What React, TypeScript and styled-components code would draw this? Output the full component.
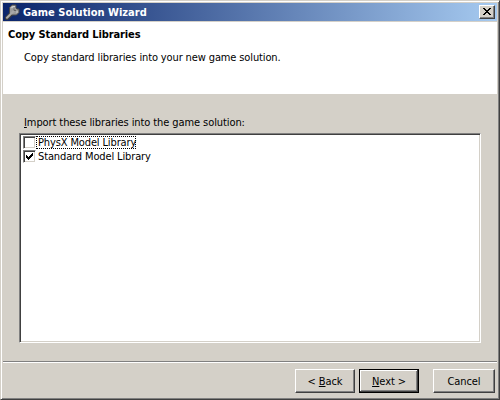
import React from "react";
import styled, { createGlobalStyle } from "styled-components";

const GlobalStyle = createGlobalStyle`
  *, *::before, *::after { box-sizing: border-box; }
  body { margin: 0; background: #d4d0c8; overflow: hidden; }
`;

const Window = styled.div`
  display: flex;
  flex-direction: column;
  width: 500px;
  height: 400px;
  padding: 2px;
  background: #d4d0c8;
  border: 1px solid;
  border-color: #d4d0c8 #404040 #404040 #d4d0c8;
  box-shadow: inset 1px 1px #fff, inset -1px -1px #808080;
  color: #000;
  font: 11px/14px "DejaVu Sans Condensed", "DejaVu Sans", sans-serif;
  font-stretch: condensed;
  cursor: default;
`;

const Label = styled.span<{ $spacing?: number }>`
  letter-spacing: ${(p) => p.$spacing ?? 0}px;
  white-space: pre;
`;

const Mnemonic = styled.span`
  text-decoration: underline;
  text-decoration-thickness: 1px;
  text-underline-offset: 1px;
  text-decoration-skip-ink: none;
`;

const TitleBar = styled.header`
  display: flex;
  align-items: center;
  height: 18px;
  flex: none;
  padding: 0 2px;
  background: linear-gradient(to right, #0a246a, #a6caf0);
  color: #fff;
  font-weight: bold;
`;

const TitleText = styled.div`
  flex: 1;
  padding: 2px 0 0 2px;
`;

const CloseButton = styled.button`
  display: flex;
  width: 16px;
  height: 14px;
  padding: 2px 3px;
  border: 1px solid;
  border-color: #fff #404040 #404040 #fff;
  background: #d4d0c8;
  box-shadow: inset -1px -1px #808080;
`;

const Banner = styled.section`
  height: 72px;
  flex: none;
  margin-top: 1px;
  padding: 6px 5px;
  background: #fff;
`;

const BannerTitle = styled.h1`
  margin: 0;
  font-size: 11px;
  line-height: 14px;
`;

const BannerText = styled.p`
  margin: 9px 0 0 16px;
`;

const Content = styled.main`
  padding: 22px 16px 0;
  height: 267px;
  flex: none;
`;

const ListCaption = styled.div`
  padding-left: 5px;
  height: 17px;
`;

const ListBox = styled.div`
  width: 462px;
  height: 210px;
  padding: 1px 2px;
  border: 1px solid;
  border-color: #808080 #fff #fff #808080;
  background: #fff;
  box-shadow: inset 1px 1px #404040, inset -1px -1px #d4d0c8;
`;

const ListRow = styled.div`
  display: flex;
  align-items: center;
  height: 14px;
  padding-left: 1px;
`;

const CheckBox = styled.span`
  display: flex;
  width: 13px;
  height: 13px;
  padding: 1px;
  border: 1px solid;
  border-color: #808080 #fff #fff #808080;
  box-shadow: inset 1px 1px #404040, inset -1px -1px #d4d0c8;
`;

const ItemText = styled.span<{ $focused?: boolean }>`
  height: 13px;
  line-height: 13px;
  padding-left: 2px;
  outline: ${(p) => (p.$focused ? "1px dotted #000" : "none")};
  outline-offset: -1px;
`;

const Footer = styled.footer`
  display: flex;
  height: 36px;
  flex: none;
  padding: 6px 2px 0 0;
  justify-content: flex-end;
  border-top: 1px solid #808080;
  box-shadow: inset 0 1px #fff;
`;

const Button = styled.button<{ $width: number; $gap?: number; $primary?: boolean }>`
  width: ${(p) => p.$width}px;
  height: 24px;
  margin: 1px 0 0 ${(p) => p.$gap ?? 0}px;
  padding: 2px 0 0;
  color: #000;
  font: inherit;
  background: #d4d0c8;
  border: 1px solid;
  border-color: ${(p) => (p.$primary ? "#000" : "#fff #404040 #404040 #fff")};
  box-shadow: ${(p) =>
    p.$primary
      ? "inset -1px -1px #404040, inset 1px 1px #fff, inset -2px -2px #808080"
      : "inset -1px -1px #808080"};
`;

const WrenchIcon = () => (
  <svg width="16" height="16" viewBox="0 0 16 16">
    <path d="M2 14 8 8" stroke="#3c3c3c" strokeWidth="4.2" strokeLinecap="round" />
    <path
      d="M4.5 3.5 7 1h4v3l1 1h2v3.5L11.5 11H7L4.5 8.5z"
      fill="#9b9b9b"
      stroke="#4a4a4a"
      strokeWidth="1"
    />
    <path d="M2 13.7 8.5 7.2" stroke="#a9a9a9" strokeWidth="2.2" strokeLinecap="round" />
    <path d="M6.5 4 8 2.5h2M11.5 8.5l1-1" stroke="#d0d0d0" strokeWidth="1.2" fill="none" />
    <path d="M9 4.5v2h2" stroke="#666" fill="none" />
  </svg>
);

const CloseIcon = () => (
  <svg width="8" height="7" shapeRendering="crispEdges">
    <path d="M0 0h2v1h1v1h2v-1h1v-1h2v1h-1v1h-1v1h-1v1h1v1h1v1h1v1h-2v-1h-1v-1h-2v1h-1v1h-2v-1h1v-1h1v-1h1v-1h-1v-1h-1v-1h-1z" />
  </svg>
);

const CheckMark = () => (
  <svg width="9" height="9" shapeRendering="crispEdges">
    <path d="M1 3h1v1h1v1h1v-1h1v-1h1v-1h1v-1h1v3h-1v1h-1v1h-1v1h-1v1h-1v-1h-1v-1h-1z" />
  </svg>
);

const libraries = [
  { name: "PhysX Model Library", checked: false, focused: true },
  { name: "Standard Model Library", checked: true, focused: false },
];

export default function App() {
  return (
    <>
      <GlobalStyle />
      <Window>
        <TitleBar>
          <WrenchIcon />
          <TitleText>
            <Label>Game Solution Wizard</Label>
          </TitleText>
          <CloseButton aria-label="Close">
            <CloseIcon />
          </CloseButton>
        </TitleBar>
        <Banner>
          <BannerTitle>
            <Label $spacing={-0.11}>Copy Standard Libraries</Label>
          </BannerTitle>
          <BannerText>
            <Label $spacing={-0.125}>Copy standard libraries into your new game solution.</Label>
          </BannerText>
        </Banner>
        <Content>
          <ListCaption>
            <Label $spacing={-0.09}>
              <Mnemonic>I</Mnemonic>mport these libraries into the game solution:
            </Label>
          </ListCaption>
          <ListBox>
            {libraries.map((lib) => (
              <ListRow key={lib.name}>
                <CheckBox>{lib.checked && <CheckMark />}</CheckBox>
                <ItemText $focused={lib.focused}>
                  <Label $spacing={-0.13}>{lib.name}</Label>
                </ItemText>
              </ListRow>
            ))}
          </ListBox>
        </Content>
        <Footer>
          <Button $width={60}>
            <Label $spacing={-0.1}>
              {"< "}
              <Mnemonic>B</Mnemonic>ack
            </Label>
          </Button>
          <Button $width={60} $gap={4} $primary>
            <Label $spacing={-0.1}>
              <Mnemonic>N</Mnemonic>
              {"ext >"}
            </Label>
          </Button>
          <Button $width={62} $gap={14}>
            <Label $spacing={-0.1}>Cancel</Label>
          </Button>
        </Footer>
      </Window>
    </>
  );
}
